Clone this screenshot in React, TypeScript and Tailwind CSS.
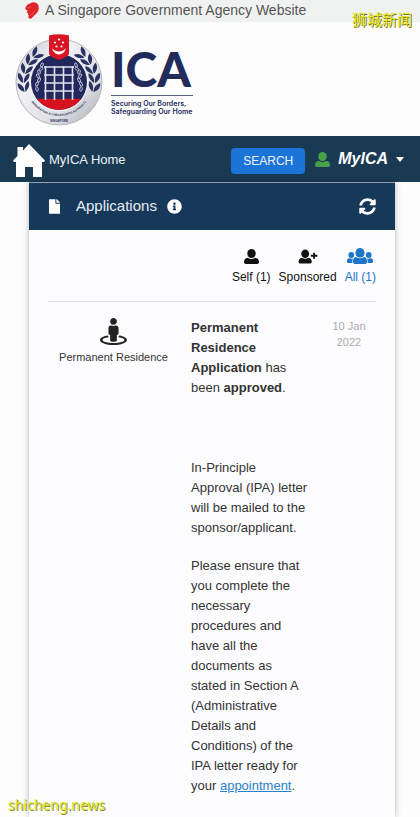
import React from "react";
import { FaFile, FaInfoCircle, FaSyncAlt, FaStreetView } from "react-icons/fa";

function LionHead() {
  return (
    <svg viewBox="0 0 14 17" className="h-[17px] w-[14px]" aria-hidden="true">
      <path
        fill="#e02428"
        d="M7 0.5C9 0 11.5 0.6 13 2.6C14.2 5 14 8 12.4 10.2C10.8 12.6 8.2 14 6.4 16.600C5 16.800 3.4 16.200 3.2 15L4 13.4L2.8 12.8L3.4 11.4L1.8 10.8L2.6 8.8L1 7.8L0.2 6.2L1.600 3.4L3.2 2.2L5 1.6Z"
      />
      <path d="M2.6 6L6 4.800M5 13.6C7 12.6 8.600 11.4 9.600 9.4" fill="none" stroke="#f08a86" strokeWidth="0.5" />
    </svg>
  );
}

const leaves = [
  [9, 55, -12], [8, 46, 3], [10, 37, 18], [14, 28, 33], [20, 21, 48],
];

function Laurel() {
  return (
    <g fill="#2b3263">
      {leaves.map(([x, y, a]) => (
        <g key={y} transform={`translate(${x} ${y}) rotate(${a})`}>
          <path d="M0 3C-5 0 -6 -3 -5 -7C-1 -5 0.500 -2 0 3Z" />
          <path d="M1 3C0.500 -2 2 -5 6 -7C7 -3 5 0 1 3Z" />
        </g>
      ))}
    </g>
  );
}

function Chain() {
  return (
    <g fill="none" stroke="#c9cee0" strokeWidth="0.9">
      <ellipse cx="27" cy="31" rx="1.200" ry="2.200" transform="rotate(20 27 31)" />
      <ellipse cx="26" cy="35" rx="1.200" ry="2.200" transform="rotate(45 26 35)" />
      <ellipse cx="24" cy="38" rx="1.200" ry="2.200" transform="rotate(-15 24 38)" />
      <ellipse cx="23" cy="42" rx="1.200" ry="2.200" transform="rotate(-35 23 42)" />
      <ellipse cx="24" cy="46" rx="1.200" ry="2.200" transform="rotate(30 24 46)" />
      <ellipse cx="22" cy="50" rx="1.200" ry="2.200" transform="rotate(25 22 50)" />
      <ellipse cx="22" cy="55" rx="1.200" ry="2.200" transform="rotate(-10 22 55)" />
    </g>
  );
}

function Emblem() {
  return (
    <svg viewBox="0 0 88 92" className="h-[92px] w-[88px] shrink-0" role="img" aria-label="ICA emblem">
      <defs>
        <linearGradient id="silver" x1="0" y1="0" x2="1" y2="1">
          <stop offset="0" stopColor="#c8cacf" />
          <stop offset="0.35" stopColor="#f1f1f4" />
          <stop offset="0.7" stopColor="#dedfe3" />
          <stop offset="1" stopColor="#a5a7ad" />
        </linearGradient>
        <clipPath id="disc">
          <circle cx="44" cy="48" r="28" />
        </clipPath>
        <path id="ringArc" d="M10 48A34 34 0 0 0 78 48" />
      </defs>
      <circle cx="44" cy="48" r="43" fill="url(#silver)" stroke="#b4b6bc" strokeWidth="1" />
      <circle cx="44" cy="48" r="29" fill="#f6f6f8" />
      <circle cx="44" cy="48" r="28" fill="#22285c" />
      <path clipPath="url(#disc)" fill="#d5131f" d="M10 67C22 64 31 65 44 65C57 65 66 64 78 67V80H10Z" />
      <Laurel />
      <g transform="translate(88 0) scale(-1 1)">
        <Laurel />
      </g>
      <Chain />
      <g transform="translate(88 0) scale(-1 1)">
        <Chain />
      </g>
      <g stroke="#dfe3f1" strokeWidth="1.600" fill="none">
        <path d="M30.500 32V66M39.500 32V66M48.500 32V66M57.500 32V66" />
        <path d="M29 33H59M29 41H59M29 49H59M29 57H59" />
      </g>
      <path fill="#d81522" d="M34 1.500Q44 -1 54 1.500V19C54 22 51 23 44 26C37 23 34 22 34 19Z" />
      <path fill="#fff" d="M37 14C39 22.500 49 22.500 51 14C48 18.500 40 18.500 37 14Z" />
      <g fill="#fff">
        <circle cx="44" cy="5.500" r="1.100" />
        <circle cx="40" cy="8.500" r="1.100" />
        <circle cx="48" cy="8.500" r="1.100" />
        <circle cx="41.500" cy="12.500" r="1.100" />
        <circle cx="46.500" cy="12.500" r="1.100" />
      </g>
      <g fill="#2b3263" fontFamily="Liberation Sans, sans-serif" fontWeight="700" fontSize="3" textAnchor="middle">
        <text>
          <textPath href="#ringArc" startOffset="50%">IMMIGRATION &amp; CHECKPOINTS AUTHORITY</textPath>
        </text>
        <text x="44" y="88">SINGAPORE</text>
      </g>
    </svg>
  );
}

function HouseIcon() {
  return (
    <svg viewBox="0 0 32 33" className="h-[33px] w-8 shrink-0" fill="#fff" aria-hidden="true">
      <path d="M16 0L32 16.500L31 18H29V33H20V23H12V33H3V18H1L0 16.500L4.500 12V3H10V6.500Z" />
    </svg>
  );
}

function PersonIcon({ className }: { className: string }) {
  return (
    <svg viewBox="0 0 16 16" className={className} fill="currentColor" aria-hidden="true">
      <ellipse cx="8" cy="4.800" rx="4.500" ry="4.800" />
      <path d="M4.200 9.200C6.500 11 9.500 11 11.800 9.200C14.600 9.400 16 11.400 16 13.600C16 15.200 15.400 16 13.800 16H2.200C0.600 16 0 15.200 0 13.600C0 11.400 1.400 9.400 4.200 9.200Z" />
    </svg>
  );
}

function PersonPlusIcon() {
  return (
    <svg viewBox="0 0 20 16" className="h-[15px] w-5" fill="currentColor" aria-hidden="true">
      <ellipse cx="7" cy="5" rx="4.200" ry="4.600" />
      <path d="M3.600 9.300C5.800 10.800 8.200 10.800 10.400 9.300C12.800 9.600 14 11.400 14 13.200C14 14.800 13.400 15.400 12 15.400H2C0.600 15.400 0 14.800 0 13.200C0 11.400 1.200 9.600 3.600 9.300Z" />
      <path d="M15.500 4H17.500V6.200H20V8.200H17.500V10.500H15.500V8.200H13V6.200H15.500Z" />
    </svg>
  );
}

function GroupIcon() {
  return (
    <svg viewBox="0 0 26 16" className="h-4 w-[26px]" fill="currentColor" aria-hidden="true">
      <ellipse cx="13" cy="4.800" rx="4.600" ry="4.800" />
      <path d="M9 9C11.500 10.800 14.500 10.800 17 9C19.400 9.400 20 11.400 20 13.600C20 15.200 19.400 16 18 16H8C6.600 16 6 15.200 6 13.600C6 11.400 6.600 9.400 9 9Z" />
      <ellipse cx="4.300" cy="7" rx="2.900" ry="3" />
      <ellipse cx="21.700" cy="7" rx="2.900" ry="3" />
      <path d="M2 10C3.500 11 5 11 6.200 10.200C5.400 11.600 5.200 13 5.400 15H1C0.300 15 0 14.600 0 13.600C0 11.800 0.600 10.400 2 10Z" />
      <path d="M24 10C22.500 11 21 11 19.800 10.200C20.600 11.600 20.800 13 20.600 15H25C25.700 15 26 14.600 26 13.600C26 11.800 25.400 10.400 24 10Z" />
    </svg>
  );
}

function Tab({ label, icon, active = false }: { label: string; icon: React.ReactNode; active?: boolean }) {
  return (
    <button
      type="button"
      className={`flex flex-col items-center gap-[5px] text-xs leading-4 whitespace-nowrap ${active ? "text-[#1d76c8]" : "text-[#111]"}`}
    >
      <span className="flex h-4 items-center">{icon}</span>
      {label}
    </button>
  );
}

export default function App() {
  return (
    <div className="relative flex min-h-screen flex-col overflow-hidden bg-[#fdfdfe] font-['Liberation_Sans',Arial,sans-serif] text-[#333]">
      <div className="flex h-[22px] items-center gap-1.5 bg-[#f0f1f1] pb-0.5 pl-[25px] text-sm leading-5 text-[#555] whitespace-nowrap">
        <LionHead />
        A Singapore Government Agency Website
      </div>

      <header className="flex h-[114px] items-start gap-2 pt-3 pl-[15px]">
        <Emblem />
        <div className="flex w-[82px] flex-col pt-[13px] font-['Lato',sans-serif] text-[#232a5c]">
          <div className="text-5xl leading-[44px] font-black">ICA</div>
          <div className="mt-1 h-px bg-[#5a5f85]" />
          <div className="mt-1 font-['Inter',sans-serif] text-[7px] leading-[8px] font-semibold whitespace-nowrap">
            Securing Our Borders,
            <br />
            Safeguarding Our Home
          </div>
        </div>
      </header>

      <nav className="flex h-[46px] items-center justify-between bg-[#1a3a54] pr-4 pl-[13px] text-[#eef3f7]">
        <a href="#home" className="flex items-center gap-1 pt-0.5 text-[13px]">
          <HouseIcon />
          MyICA Home
        </a>
        <div className="flex items-center">
          <button type="button" className="mt-1 h-[26px] w-[74px] rounded bg-[#1b75d8] text-xs">
            SEARCH
          </button>
          <button type="button" className="ml-[10px] flex items-center text-base font-bold italic">
            <PersonIcon className="h-[17px] w-[15px] text-[#45a049]" />
            <span className="ml-2 text-white">MyICA</span>
            <span className="ml-2 border-x-4 border-t-[5px] border-x-transparent border-t-white" />
          </button>
        </div>
      </nav>

      <main className="mr-[25px] ml-[29px] flex flex-1 flex-col border-t border-[#8fa3b2] bg-[#fdfcfe] shadow-[0_0_6px_rgba(0,0,0,0.3)]">
        <div className="flex h-[47px] items-center bg-[#16395a] pr-[19px] pl-5 text-white">
          <FaFile className="h-[15px] w-[11px]" />
          <h1 className="ml-4 text-[15px] text-[#e6edf3]">Applications</h1>
          <FaInfoCircle className="ml-2.5 size-[15px]" />
          <button type="button" aria-label="Refresh" className="ml-auto">
            <FaSyncAlt className="size-[17px]" />
          </button>
        </div>

        <div className="mx-[19px] flex justify-end gap-2 border-b border-[#e2e2e4] pt-[18px] pb-4">
          <Tab label="Self (1)" icon={<PersonIcon className="h-[15px] w-[15px]" />} />
          <Tab label="Sponsored" icon={<PersonPlusIcon />} />
          <Tab label="All (1)" icon={<GroupIcon />} active />
        </div>

        <article className="flex items-start pt-4 pr-5 pl-[30px]">
          <div className="flex w-[109px] shrink-0 flex-col items-center text-[11px] leading-4 whitespace-nowrap">
            <FaStreetView className="size-[27px] text-[#222]" />
            <span className="mt-1">Permanent Residence</span>
          </div>
          <div className="ml-[23px] min-w-0 flex-1 text-[13px] leading-5">
            <p>
              <b>
                Permanent
                <br />
                Residence
                <br />
                Application
              </b>{" "}
              has
              <br />
              been <b>approved</b>.
            </p>
            <p className="mt-[60px]">
              In-Principle
              <br />
              Approval (IPA) letter
              <br />
              will be mailed to the
              <br />
              sponsor/applicant.
            </p>
            <p className="mt-[18px] whitespace-nowrap">
              Please ensure that
              <br />
              you complete the
              <br />
              necessary
              <br />
              procedures and
              <br />
              have all the
              <br />
              documents as
              <br />
              stated in Section A
              <br />
              (Administrative
              <br />
              Details and
              <br />
              Conditions) of the
              <br />
              IPA letter ready for
              <br />
              your{" "}
              <a href="#appointment" className="text-[#2a80c8] underline">
                appointment
              </a>
              .
            </p>
          </div>
          <time dateTime="2022-01-10" className="w-[52px] shrink-0 text-center text-[11px] leading-4 text-[#aaa]">
            10 Jan
            <br />
            2022
          </time>
        </article>
      </main>

      <div className="absolute top-[9px] right-2 font-['Noto_Sans_CJK_SC',sans-serif] text-[15px] leading-5 text-[#e8e81c] [text-shadow:1px_1px_0_#77771e]">
        狮城新闻
      </div>
      <div className="absolute bottom-0.5 left-2 font-['Noto_Sans',sans-serif] text-sm leading-5 text-[#dfe61a] [text-shadow:1px_1px_0_#8a8a3a]">
        shicheng.news
      </div>
    </div>
  );
}
